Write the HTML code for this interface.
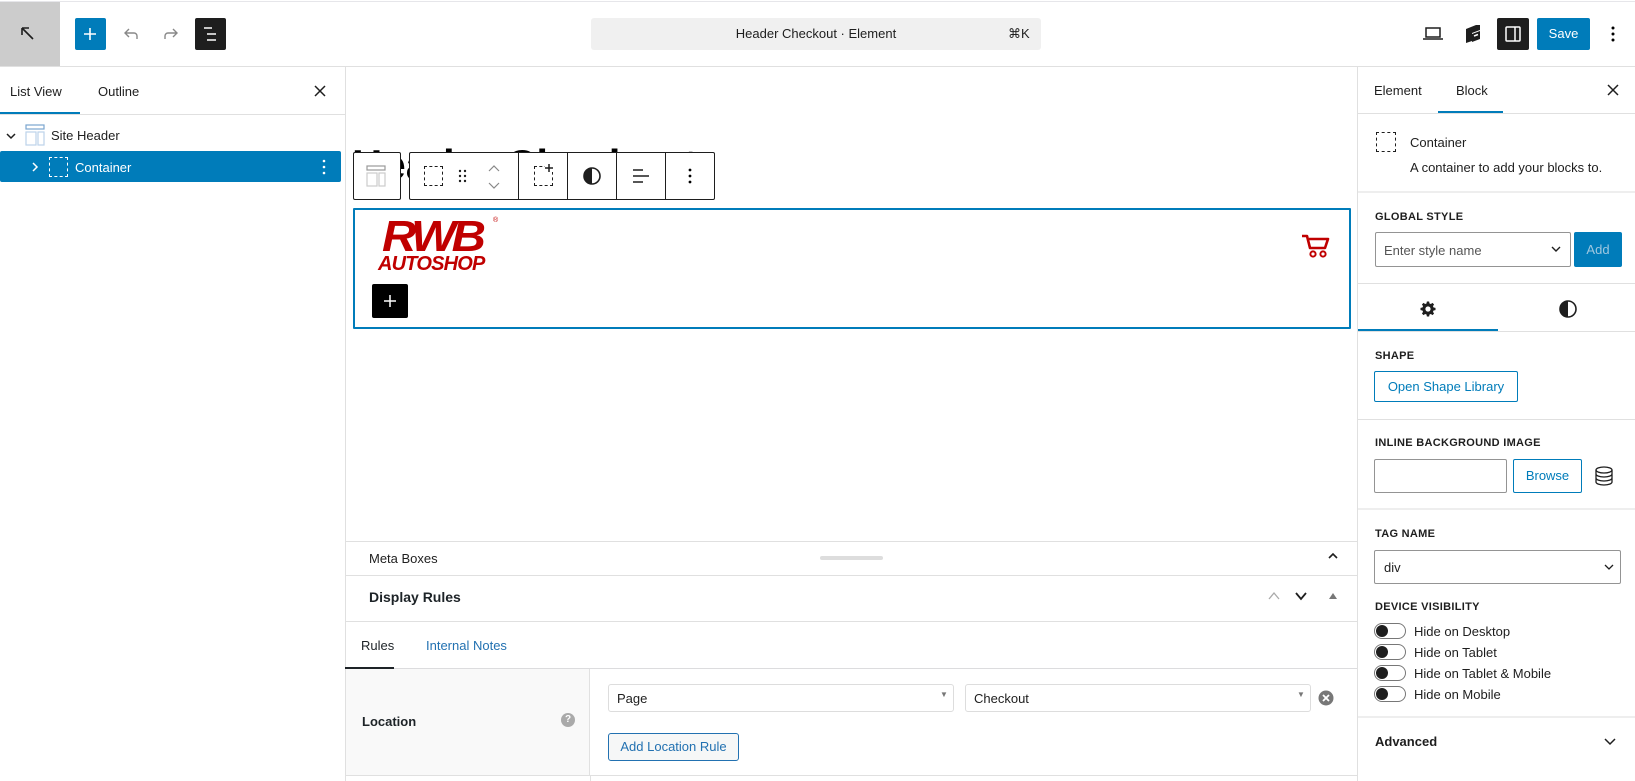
<!DOCTYPE html>
<html><head><meta charset="utf-8"><style>
*{box-sizing:border-box;margin:0;padding:0}
body{width:1635px;height:781px;overflow:hidden;background:#fff;font-family:"Liberation Sans",sans-serif;color:#1e1e1e;position:relative;font-size:13px}
.a{position:absolute}
.hr{position:absolute;height:1px;background:#e0e0e0}
.lbl{position:absolute;font-size:11px;font-weight:bold;letter-spacing:.3px;color:#1e1e1e}
.tog{position:absolute;width:32px;height:16px;border:1px solid #777;border-radius:9px}
.tog:after{content:"";position:absolute;left:1px;top:1px;width:12px;height:12px;border-radius:50%;background:#1e1e1e}
.tl{position:absolute;font-size:13px}
</style></head><body>
<div class="hr" style="left:0;top:1px;width:1635px;background:#e6e6ea"></div>
<div class="a" style="left:0;top:2px;width:60px;height:64px;background:#ccc"></div>
<svg class="a" style="left:18px;top:24px" width="20" height="20" viewBox="0 0 20 20"><path d="M4 4L15 15M4 4h7M4 4v7" stroke="#1e1e1e" stroke-width="1.6" fill="none"/></svg>
<div class="a" style="left:75px;top:18px;width:31px;height:32px;background:#007cba;border-radius:2px"></div>
<svg class="a" style="left:80px;top:24px" width="20" height="20"><path d="M10 4v12M4 10h12" stroke="#fff" stroke-width="1.6"/></svg>
<svg class="a" style="left:121px;top:24px" width="20" height="20"><path d="M16 15v-3a3 3 0 0 0-3-3H5M8 5L4 9l4 4" stroke="#888" stroke-width="1.4" fill="none"/></svg>
<svg class="a" style="left:161px;top:24px" width="20" height="20"><path d="M4 15v-3a3 3 0 0 1 3-3h8M12 5l4 4-4 4" stroke="#888" stroke-width="1.4" fill="none"/></svg>
<div class="a" style="left:195px;top:18px;width:31px;height:32px;background:#1e1e1e;border-radius:2px"></div>
<svg class="a" style="left:200px;top:24px" width="20" height="20"><path d="M4 4h8M7 10h9M7 16h9" stroke="#fff" stroke-width="1.6"/></svg>
<div class="a" style="left:591px;top:18px;width:450px;height:32px;background:#f0f0f0;border-radius:3px"></div>
<div class="a" style="left:591px;top:26px;width:450px;text-align:center;font-size:13px">Header Checkout · Element</div>
<div class="a" style="left:1008px;top:26px;font-size:13px">⌘K</div>
<svg class="a" style="left:1422px;top:24px" width="22" height="20"><path d="M4 4h14v9H4zM1 15h20" stroke="#1e1e1e" stroke-width="1.5" fill="none"/></svg>
<svg class="a" style="left:1463px;top:23px" width="20" height="22"><path d="M3 6l10-4h4v5l-8 3v8l-6 2z" fill="#1e1e1e"/><path d="M9 11l8-3v8l-8 3z" fill="#1e1e1e"/><path d="M11 13l4-1.5" stroke="#fff" stroke-width="1.5"/></svg>
<div class="a" style="left:1497px;top:18px;width:32px;height:32px;background:#1e1e1e;border-radius:2px"></div>
<svg class="a" style="left:1503px;top:24px" width="20" height="20"><rect x="3" y="3" width="14" height="14" rx="1" stroke="#fff" stroke-width="1.5" fill="none"/><path d="M12 3v14" stroke="#fff" stroke-width="1.5"/></svg>
<div class="a" style="left:1537px;top:18px;width:53px;height:32px;background:#007cba;border-radius:2px;color:#fff;font-size:13px;text-align:center;line-height:32px">Save</div>
<svg class="a" style="left:1605px;top:24px" width="16" height="20"><circle cx="8" cy="4" r="1.5"/><circle cx="8" cy="10" r="1.5"/><circle cx="8" cy="16" r="1.5"/></svg>
<div class="hr" style="left:0;top:66px;width:1635px"></div>

<div class="a" style="left:345px;top:66px;width:1px;height:715px;background:#e0e0e0"></div>
<div class="tl" style="left:10px;top:84px">List View</div>
<div class="tl" style="left:98px;top:84px">Outline</div>
<svg class="a" style="left:313px;top:84px" width="14" height="14"><path d="M2 2l10 10M12 2L2 12" stroke="#1e1e1e" stroke-width="1.5"/></svg>
<div class="hr" style="left:0;top:114px;width:345px"></div>
<div class="a" style="left:0;top:112px;width:80px;height:2px;background:#007cba"></div>
<svg class="a" style="left:5px;top:130px" width="12" height="12"><path d="M2 4l4 4 4-4" stroke="#1e1e1e" stroke-width="1.5" fill="none"/></svg>
<svg class="a" style="left:25px;top:124px" width="20" height="22"><rect x="1" y="1" width="18" height="4" fill="none" stroke="#7aa5cf" stroke-width="1.2"/><rect x="1" y="8" width="10" height="13" fill="none" stroke="#bcd3ea" stroke-width="1.2"/><rect x="13" y="8" width="6" height="13" fill="none" stroke="#bcd3ea" stroke-width="1.2"/></svg>
<div class="tl" style="left:51px;top:128px">Site Header</div>
<div class="a" style="left:0;top:151px;width:341px;height:31px;background:#007cba;border-radius:2px"></div>
<svg class="a" style="left:30px;top:161px" width="10" height="12"><path d="M3 2l4 4-4 4" stroke="#fff" stroke-width="1.5" fill="none"/></svg>
<div class="a" style="left:49px;top:157px;width:19px;height:20px;border:1.5px dashed #fff"></div>
<div class="tl" style="left:75px;top:160px;color:#fff">Container</div>
<svg class="a" style="left:318px;top:158px" width="12" height="18"><circle cx="6" cy="3" r="1.3" fill="#fff"/><circle cx="6" cy="9" r="1.3" fill="#fff"/><circle cx="6" cy="15" r="1.3" fill="#fff"/></svg>

<div class="a" style="left:352px;top:141px;font-size:42px;font-weight:bold;white-space:nowrap;color:#000">Header Checkout</div>
<div class="a" style="left:353px;top:152px;width:48px;height:48px;background:#fff;border:1px solid #1e1e1e;border-radius:2px"></div>
<svg class="a" style="left:365px;top:164px" width="24" height="24"><rect x="2" y="2" width="18" height="4" fill="none" stroke="#999" stroke-width="1.2"/><rect x="2" y="9" width="10" height="13" fill="none" stroke="#ccc" stroke-width="1.2"/><rect x="14" y="9" width="6" height="13" fill="none" stroke="#ccc" stroke-width="1.2"/></svg>
<div class="a" style="left:409px;top:152px;width:306px;height:48px;background:#fff;border:1px solid #1e1e1e;border-radius:2px"></div>
<div class="a" style="left:518px;top:152px;width:1px;height:48px;background:#1e1e1e"></div>
<div class="a" style="left:567px;top:152px;width:1px;height:48px;background:#1e1e1e"></div>
<div class="a" style="left:616px;top:152px;width:1px;height:48px;background:#1e1e1e"></div>
<div class="a" style="left:665px;top:152px;width:1px;height:48px;background:#1e1e1e"></div>
<div class="a" style="left:424px;top:166px;width:19px;height:20px;border:1.5px dashed #1e1e1e"></div>
<svg class="a" style="left:458px;top:168px" width="10" height="16"><g fill="#1e1e1e"><circle cx="2" cy="3" r="1.2"/><circle cx="7" cy="3" r="1.2"/><circle cx="2" cy="8" r="1.2"/><circle cx="7" cy="8" r="1.2"/><circle cx="2" cy="13" r="1.2"/><circle cx="7" cy="13" r="1.2"/></g></svg>
<svg class="a" style="left:486px;top:163px" width="16" height="28"><path d="M3 8l5-5 5 5M3 20l5 5 5-5" stroke="#888" stroke-width="1.2" fill="none"/></svg>
<div class="a" style="left:534px;top:166px;width:19px;height:20px;border:1.5px dashed #1e1e1e"></div>
<div class="a" style="left:545px;top:164px;width:8px;height:8px;background:#fff"></div>
<svg class="a" style="left:544px;top:163px" width="10" height="10"><path d="M5 1v8M1 5h8" stroke="#1e1e1e" stroke-width="1.5"/></svg>
<svg class="a" style="left:582px;top:166px" width="20" height="20"><circle cx="10" cy="10" r="8" stroke="#1e1e1e" stroke-width="1.6" fill="none"/><path d="M10 2a8 8 0 0 0 0 16z" fill="#1e1e1e"/></svg>
<svg class="a" style="left:631px;top:166px" width="20" height="20"><path d="M2 4h10M2 10h16M2 16h10" stroke="#1e1e1e" stroke-width="1.5"/></svg>
<svg class="a" style="left:682px;top:166px" width="16" height="20"><circle cx="8" cy="4" r="1.4"/><circle cx="8" cy="10" r="1.4"/><circle cx="8" cy="16" r="1.4"/></svg>

<div class="a" style="left:353px;top:208px;width:998px;height:121px;border:2px solid #007cba;border-radius:1px"></div>
<div class="a" style="left:382px;top:215px;font-size:44px;font-weight:900;font-style:italic;color:#c00000;letter-spacing:-4px;line-height:1;transform:scaleX(1.08);transform-origin:left">RWB</div>
<div class="a" style="left:378px;top:254px;font-size:20px;font-weight:bold;font-style:italic;color:#c00000;letter-spacing:-.8px;line-height:1">AUTOSHOP</div>
<div class="a" style="left:493px;top:217px;font-size:7px;color:#c00000">®</div>
<div class="a" style="left:372px;top:284px;width:36px;height:34px;background:#000;border-radius:2px"></div>
<svg class="a" style="left:382px;top:293px" width="16" height="16"><path d="M8 2v12M2 8h12" stroke="#fff" stroke-width="1.5"/></svg>
<svg class="a" style="left:1300px;top:232px" width="32" height="28"><path d="M2 4h5l3 12h15l3-9H9" stroke="#c00000" stroke-width="2.6" fill="none" stroke-linejoin="round"/><circle cx="13" cy="22" r="2.6" stroke="#c00000" stroke-width="2" fill="none"/><circle cx="23" cy="22" r="2.6" stroke="#c00000" stroke-width="2" fill="none"/></svg>

<div class="hr" style="left:346px;top:541px;width:1011px"></div>
<div class="tl" style="left:369px;top:551px">Meta Boxes</div>
<div class="a" style="left:820px;top:556px;width:63px;height:4px;border-radius:2px;background:#ddd"></div>
<svg class="a" style="left:1327px;top:551px" width="12" height="10"><path d="M2 7l4-4 4 4" stroke="#1e1e1e" stroke-width="1.6" fill="none"/></svg>
<div class="hr" style="left:346px;top:575px;width:1011px"></div>
<div class="a" style="left:369px;top:589px;font-size:14px;font-weight:bold;color:#1d2327">Display Rules</div>
<svg class="a" style="left:1267px;top:590px" width="14" height="12"><path d="M2 9l5-6 5 6" stroke="#aaa" stroke-width="1.3" fill="none"/></svg>
<svg class="a" style="left:1294px;top:590px" width="14" height="12"><path d="M2 3l5 6 5-6" stroke="#1e1e1e" stroke-width="1.8" fill="none"/></svg>
<svg class="a" style="left:1328px;top:591px" width="10" height="10"><path d="M1 8l4-6 4 6z" fill="#777"/></svg>
<div class="hr" style="left:346px;top:621px;width:1011px"></div>
<div class="tl" style="left:361px;top:638px;color:#1d2327">Rules</div>
<div class="tl" style="left:426px;top:638px;color:#2271b1">Internal Notes</div>
<div class="hr" style="left:346px;top:668px;width:1011px;background:#dcdcde"></div>
<div class="a" style="left:345px;top:667px;width:49px;height:2px;background:#1d2327"></div>
<div class="a" style="left:346px;top:669px;width:244px;height:106px;background:#f9f9f9;border-right:1px solid #e1e1e1"></div>
<div class="a" style="left:362px;top:714px;font-size:13px;font-weight:bold;color:#1d2327">Location</div>
<div class="a" style="left:561px;top:713px;width:14px;height:14px;border-radius:50%;background:#aaa;color:#fff;font-size:10px;font-weight:bold;text-align:center;line-height:14px">?</div>
<div class="a" style="left:608px;top:684px;width:346px;height:28px;border:1px solid #ddd;border-radius:3px"></div>
<div class="tl" style="left:617px;top:691px">Page</div>
<div class="a" style="left:940px;top:690px;font-size:8px;color:#777">▼</div>
<div class="a" style="left:965px;top:684px;width:346px;height:28px;border:1px solid #ddd;border-radius:3px"></div>
<div class="tl" style="left:974px;top:691px">Checkout</div>
<div class="a" style="left:1297px;top:690px;font-size:8px;color:#777">▼</div>
<svg class="a" style="left:1318px;top:690px" width="16" height="16"><circle cx="8" cy="8" r="7.5" fill="#777"/><path d="M5 5l6 6M11 5l-6 6" stroke="#fff" stroke-width="1.8"/></svg>
<div class="a" style="left:608px;top:733px;width:131px;height:28px;border:1px solid #2271b1;border-radius:3px;background:#f6f7f7;color:#2271b1;font-size:13px;text-align:center;line-height:26px">Add Location Rule</div>
<div class="hr" style="left:346px;top:775px;width:1011px"></div>
<div class="a" style="left:590px;top:776px;width:1px;height:5px;background:#e1e1e1"></div>

<div class="a" style="left:1357px;top:66px;width:1px;height:715px;background:#e0e0e0"></div>
<div class="tl" style="left:1374px;top:83px">Element</div>
<div class="tl" style="left:1456px;top:83px">Block</div>
<svg class="a" style="left:1606px;top:83px" width="14" height="14"><path d="M2 2l10 10M12 2L2 12" stroke="#1e1e1e" stroke-width="1.5"/></svg>
<div class="hr" style="left:1358px;top:113px;width:277px"></div>
<div class="a" style="left:1438px;top:111px;width:65px;height:2px;background:#007cba"></div>
<div class="a" style="left:1376px;top:132px;width:20px;height:20px;border:1.5px dashed #1e1e1e"></div>
<div class="tl" style="left:1410px;top:135px">Container</div>
<div class="tl" style="left:1410px;top:160px">A container to add your blocks to.</div>
<div class="a" style="left:1358px;top:191px;width:277px;height:2px;background:#eee"></div>
<div class="lbl" style="left:1375px;top:211px">GLOBAL STYLE</div>
<div class="a" style="left:1375px;top:232px;width:196px;height:35px;border:1px solid #949494;border-radius:2px"></div>
<div class="tl" style="left:1384px;top:243px;color:#555">Enter style name</div>
<svg class="a" style="left:1550px;top:244px" width="12" height="10"><path d="M2 3l4 4 4-4" stroke="#1e1e1e" stroke-width="1.4" fill="none"/></svg>
<div class="a" style="left:1574px;top:232px;width:48px;height:35px;background:#007cba;border-radius:2px;color:#9ec7e0;font-size:13px;text-align:center;line-height:35px">Add</div>
<div class="hr" style="left:1358px;top:283px;width:277px"></div>
<svg class="a" style="left:1419px;top:300px" width="18" height="18" viewBox="0 0 24 24"><path fill="#1e1e1e" d="M12 8.5a3.5 3.5 0 1 0 0 7 3.5 3.5 0 0 0 0-7zM10.5 2h3l.5 2.6 1.8.8 2.2-1.5 2.1 2.1-1.5 2.2.8 1.8 2.6.5v3l-2.6.5-.8 1.8 1.5 2.2-2.1 2.1-2.2-1.5-1.8.8-.5 2.6h-3l-.5-2.6-1.8-.8-2.2 1.5-2.1-2.1 1.5-2.2-.8-1.8L2 13.5v-3l2.6-.5.8-1.8-1.5-2.2 2.1-2.1 2.2 1.5 1.8-.8z"/><circle cx="12" cy="12" r="2.6" fill="#fff"/></svg>
<svg class="a" style="left:1558px;top:299px" width="20" height="20"><circle cx="10" cy="10" r="8" stroke="#1e1e1e" stroke-width="1.6" fill="none"/><path d="M10 2a8 8 0 0 0 0 16z" fill="#1e1e1e"/></svg>
<div class="hr" style="left:1358px;top:331px;width:277px"></div>
<div class="a" style="left:1358px;top:329px;width:140px;height:2px;background:#007cba"></div>
<div class="lbl" style="left:1375px;top:350px">SHAPE</div>
<div class="a" style="left:1374px;top:371px;width:144px;height:31px;border:1px solid #007cba;border-radius:2px;color:#007cba;font-size:13px;text-align:center;line-height:29px">Open Shape Library</div>
<div class="hr" style="left:1358px;top:419px;width:277px"></div>
<div class="lbl" style="left:1375px;top:437px">INLINE BACKGROUND IMAGE</div>
<div class="a" style="left:1374px;top:459px;width:133px;height:34px;border:1px solid #949494;border-radius:2px"></div>
<div class="a" style="left:1513px;top:459px;width:69px;height:34px;border:1px solid #007cba;border-radius:2px;color:#007cba;font-size:13px;text-align:center;line-height:32px">Browse</div>
<svg class="a" style="left:1593px;top:465px" width="22" height="22"><ellipse cx="11" cy="5" rx="8" ry="3" stroke="#1e1e1e" stroke-width="1.3" fill="none"/><path d="M3 5v12c0 1.7 3.6 3 8 3s8-1.3 8-3V5M3 9c0 1.7 3.6 3 8 3s8-1.3 8-3M3 13c0 1.7 3.6 3 8 3s8-1.3 8-3" stroke="#1e1e1e" stroke-width="1.3" fill="none"/></svg>
<div class="a" style="left:1358px;top:508px;width:277px;height:2px;background:#eee"></div>
<div class="lbl" style="left:1375px;top:528px">TAG NAME</div>
<div class="a" style="left:1374px;top:550px;width:247px;height:34px;border:1px solid #949494;border-radius:2px"></div>
<div class="tl" style="left:1384px;top:560px">div</div>
<svg class="a" style="left:1603px;top:562px" width="12" height="10"><path d="M2 3l4 4 4-4" stroke="#1e1e1e" stroke-width="1.3" fill="none"/></svg>
<div class="lbl" style="left:1375px;top:601px">DEVICE VISIBILITY</div>
<div class="tog" style="left:1374px;top:623px"></div><div class="tl" style="left:1414px;top:624px">Hide on Desktop</div>
<div class="tog" style="left:1374px;top:644px"></div><div class="tl" style="left:1414px;top:645px">Hide on Tablet</div>
<div class="tog" style="left:1374px;top:665px"></div><div class="tl" style="left:1414px;top:666px">Hide on Tablet &amp; Mobile</div>
<div class="tog" style="left:1374px;top:686px"></div><div class="tl" style="left:1414px;top:687px">Hide on Mobile</div>
<div class="a" style="left:1358px;top:716px;width:277px;height:2px;background:#eee"></div>
<div class="a" style="left:1375px;top:734px;font-size:13px;font-weight:bold;color:#1e1e1e">Advanced</div>
<svg class="a" style="left:1603px;top:736px" width="14" height="10"><path d="M2 3l5 5 5-5" stroke="#1e1e1e" stroke-width="1.5" fill="none"/></svg>
</body></html>
